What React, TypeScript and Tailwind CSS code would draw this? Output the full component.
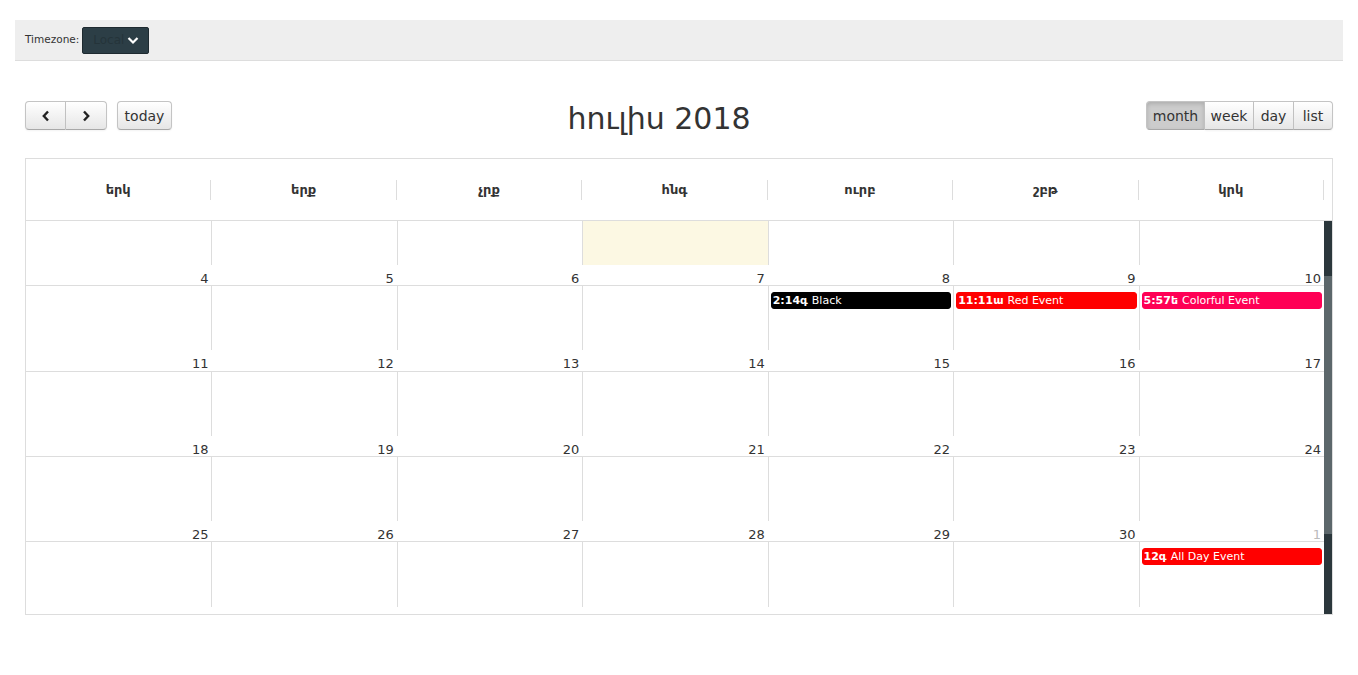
import React from 'react';

const HEADERS = ['երկ', 'երք', 'չրք', 'հնգ', 'ուրբ', 'շբթ', 'կրկ'];

type Ev = { col: number; time: string; title: string; color: string };

type Band = {
  top: number;
  strip: number;
  numbers: { n: number; other?: boolean }[] | null;
  events: Ev[];
  todayCol?: number;
};

const BANDS: Band[] = [
  { top: 44, strip: 20, numbers: [4, 5, 6, 7, 8, 9, 10].map((n) => ({ n })), events: [], todayCol: 3 },
  {
    top: 64,
    strip: 21,
    numbers: [11, 12, 13, 14, 15, 16, 17].map((n) => ({ n })),
    events: [
      { col: 4, time: '2:14գ', title: 'Black', color: 'bg-black border-black' },
      { col: 5, time: '11:11ա', title: 'Red Event', color: 'bg-[#ff0000] border-[#ff0000]' },
      { col: 6, time: '5:57ե', title: 'Colorful Event', color: 'bg-[#ff0055] border-[#ff0055]' },
    ],
  },
  { top: 64, strip: 20, numbers: [18, 19, 20, 21, 22, 23, 24].map((n) => ({ n })), events: [] },
  {
    top: 64,
    strip: 20,
    numbers: [
      { n: 25 },
      { n: 26 },
      { n: 27 },
      { n: 28 },
      { n: 29 },
      { n: 30 },
      { n: 1, other: true },
    ],
    events: [],
  },
  {
    top: 65,
    strip: 7,
    numbers: null,
    events: [{ col: 6, time: '12գ', title: 'All Day Event', color: 'bg-[#ff0000] border-[#ff0000]' }],
  },
];

const btn =
  'h-[29px] px-[9px] border border-[#c4c4c4] border-b-[#a8a8a8] bg-gradient-to-b from-white to-[#e6e6e6] text-[#333] text-[14px] leading-none shadow-[inset_0_1px_0_rgba(255,255,255,0.2),0_1px_2px_rgba(0,0,0,0.05)] flex items-center justify-center';

const Chevron = ({ dir }: { dir: 'left' | 'right' }) => (
  <svg width="10" height="12" viewBox="0 0 10 12" fill="none">
    <path
      d={dir === 'left' ? 'M7 1.5 L2.8 6 L7 10.5' : 'M3 1.5 L7.2 6 L3 10.5'}
      stroke="#222"
      strokeWidth="2.4"
      strokeLinejoin="miter"
    />
  </svg>
);

export default function App() {
  return (
    <div className="min-h-screen bg-white pt-5 px-[15px] text-[#333]" style={{ fontFamily: '"DejaVu Sans", sans-serif' }}>
      {/* timezone bar */}
      <div className="h-[41px] bg-[#eeeeee] border-b border-[#dddddd] flex items-center px-[10px] gap-[3px]">
        <span className="text-[10.5px] text-[#333]">Timezone:</span>
        <div className="w-[67px] h-[27px] bg-[#2c3e46] border border-[#1e2a30] rounded-[2px] flex items-center justify-between pl-[10px] pr-[9px]">
          <span className="text-[12px] text-[#25343a]">Local</span>
          <svg width="12" height="9" viewBox="0 0 12 9" fill="none">
            <path d="M1.5 2 L6 6.5 L10.5 2" stroke="#fff" strokeWidth="2.2" />
          </svg>
        </div>
      </div>

      <div className="px-[10px] mt-[40px]">
        {/* toolbar */}
        <div className="flex items-start h-[57px]">
          <div className="flex items-center gap-[10px]">
            <div className="flex">
              <button className={`${btn} w-[41px] rounded-l-[4px]`}>
                <Chevron dir="left" />
              </button>
              <button className={`${btn} w-[41px] rounded-r-[4px] border-l-0`}>
                <Chevron dir="right" />
              </button>
            </div>
            <button className={`${btn} w-[55px] rounded-[4px]`}>today</button>
          </div>
          <h2 className="flex-1 text-center text-[30px] leading-none mt-[3px] text-[#333] font-normal">հուլիս 2018</h2>
          <div className="flex">
            <button className={`${btn} w-[59px] rounded-l-[4px] bg-none bg-[#cccccc] shadow-[inset_0_2px_4px_rgba(0,0,0,0.15)]`}>month</button>
            <button className={`${btn} w-[49px] border-l-0`}>week</button>
            <button className={`${btn} w-[40px] border-l-0`}>day</button>
            <button className={`${btn} w-[39px] border-l-0 rounded-r-[4px]`}>list</button>
          </div>
        </div>

        {/* grid */}
        <div className="border border-[#dddddd]">
          <div className="flex border-b border-[#dddddd] h-[62px] items-center">
            <div className="flex-1 grid grid-cols-7">
              {HEADERS.map((h) => (
                <div key={h} className="h-[20px] border-r border-[#dddddd] flex items-center justify-center text-[13px] font-bold text-[#333]">
                  {h}
                </div>
              ))}
            </div>
            <div className="w-[8px]" />
          </div>

          <div className="flex">
            <div className="flex-1">
              {BANDS.map((b, bi) => (
                <div key={bi} className={bi > 0 ? 'border-t border-[#dddddd]' : ''}>
                  <div className="grid grid-cols-7">
                    {Array.from({ length: 7 }).map((_, c) => {
                      const ev = b.events.find((e) => e.col === c);
                      return (
                        <div
                          key={c}
                          className={`${c > 0 ? 'border-l border-[#dddddd]' : ''} ${b.todayCol === c ? 'bg-[#fcf8e3]' : ''} px-[2px] pt-[6px]`}
                          style={{ height: b.top }}
                        >
                          {ev && (
                            <div className={`${ev.color} border rounded-[3px] h-[17px] flex items-center px-[1px] text-white text-[11px] leading-none whitespace-nowrap overflow-hidden`}>
                              <span className="font-bold">{ev.time}</span>
                              <span className="ml-[4px]">{ev.title}</span>
                            </div>
                          )}
                        </div>
                      );
                    })}
                  </div>
                  <div className="grid grid-cols-7" style={{ height: b.strip }}>
                    {b.numbers?.map((d, i) => (
                      <div key={i} className={`text-right pr-[3px] text-[13px] leading-[20px] pt-[4px] ${d.other ? 'text-[#bbbbbb]' : 'text-[#333]'}`}>
                        {d.n}
                      </div>
                    ))}
                  </div>
                </div>
              ))}
            </div>
            <div className="w-[8px] flex flex-col">
              <div className="h-[55px] bg-[#2b373c]" />
              <div className="h-[258px] bg-[#5c676b]" />
              <div className="flex-1 bg-[#2b373c]" />
            </div>
          </div>
        </div>
      </div>
    </div>
  );
}
